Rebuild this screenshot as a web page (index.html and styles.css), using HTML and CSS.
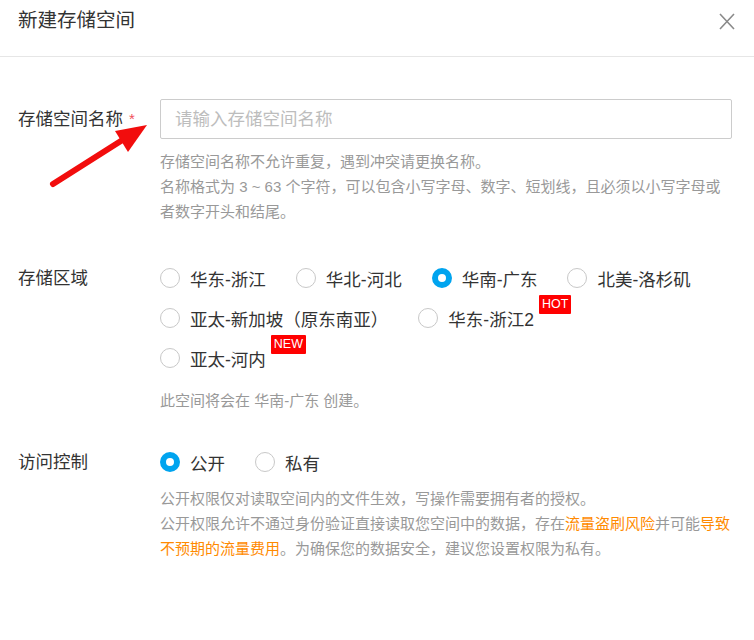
FILE: index.html
```html
<!DOCTYPE html>
<html lang="zh-CN">
<head>
<meta charset="utf-8">
<title>新建存储空间</title>
<link rel="stylesheet" href="styles.css">
</head>
<body>
<div class="dialog">
  <header class="dlg-head">
    <h1 class="dlg-title">新建存储空间</h1>
    <button class="dlg-close" type="button" aria-label="关闭">
      <svg width="16" height="17" viewBox="0 0 16 17"><path d="M1 1 L15 16 M15 1 L1 16" stroke="#8a8a8a" stroke-width="1.6" fill="none"/></svg>
    </button>
  </header>

  <form class="dlg-body">
    <div class="field field-name">
      <label class="field-label">存储空间名称<span class="req">*</span></label>
      <div class="field-control">
        <input class="text-input" type="text" placeholder="请输入存储空间名称">
        <p class="help help-name">存储空间名称不允许重复，遇到冲突请更换名称。<br>名称格式为 3 ~ 63 个字符，可以包含小写字母、数字、短划线，且必须以小写字母或<br>者数字开头和结尾。</p>
      </div>
    </div>

    <div class="field field-region">
      <label class="field-label">存储区域</label>
      <div class="field-control">
        <div class="radio-group">
          <label class="radio"><span class="radio-dot"></span><span class="radio-text">华东-浙江</span></label>
          <label class="radio"><span class="radio-dot"></span><span class="radio-text">华北-河北</span></label>
          <label class="radio"><span class="radio-dot checked"></span><span class="radio-text">华南-广东</span></label>
          <label class="radio"><span class="radio-dot"></span><span class="radio-text">北美-洛杉矶</span></label>
          <label class="radio"><span class="radio-dot"></span><span class="radio-text">亚太-新加坡（原东南亚）</span></label>
          <label class="radio"><span class="radio-dot"></span><span class="radio-text">华东-浙江2</span><span class="badge">HOT</span></label>
          <label class="radio"><span class="radio-dot"></span><span class="radio-text">亚太-河内</span><span class="badge">NEW</span></label>
        </div>
        <p class="help help-region">此空间将会在 华南-广东 创建。</p>
      </div>
    </div>

    <div class="field field-access">
      <label class="field-label">访问控制</label>
      <div class="field-control">
        <div class="radio-group">
          <label class="radio"><span class="radio-dot checked"></span><span class="radio-text">公开</span></label>
          <label class="radio"><span class="radio-dot"></span><span class="radio-text">私有</span></label>
        </div>
        <p class="help help-access">公开权限仅对读取空间内的文件生效，写操作需要拥有者的授权。<br>公开权限允许不通过身份验证直接读取您空间中的数据，存在<span class="warn">流量盗刷风险</span>并可能<span class="warn">导致不预期的流量费用</span>。为确保您的数据安全，建议您设置权限为私有。</p>
      </div>
    </div>
  </form>

  <svg class="annot-arrow" width="754" height="640" viewBox="0 0 754 640" aria-hidden="true">
    <line x1="53" y1="184" x2="124" y2="139" stroke="#f20d0d" stroke-width="6" stroke-linecap="round"/>
    <polygon points="147,125 115,131 128,152" fill="#f20d0d"/>
  </svg>
</div>
</body>
</html>
```

FILE: styles.css
```css
html, body {
  margin: 0;
  padding: 0;
  background: #fff;
}

body {
  font-family: "Liberation Sans", "Noto Sans CJK SC", sans-serif;
  color: #333;
}

.dialog {
  position: relative;
  width: 754px;
  height: 640px;
  overflow: hidden;
}

.dlg-head {
  display: flex;
  justify-content: space-between;
  align-items: flex-start;
  box-sizing: border-box;
  height: 57px;
  padding: 6px 19px 0 18px;
  border-bottom: 1px solid #e6e6e6;
}

.dlg-title {
  margin: 0;
  font-size: 19.5px;
  font-weight: normal;
  line-height: 28px;
  color: #333;
}

.dlg-close {
  display: flex;
  margin: 7px 0 0;
  padding: 0;
  border: 0;
  background: none;
}

.dlg-body {
  display: flex;
  flex-direction: column;
  padding: 42px 22px 0 18px;
}

.field {
  display: grid;
  grid-template-columns: 142px 1fr;
}

.field-name { margin-bottom: 34px; }
.field-region { margin-bottom: 29px; }

.field-label {
  font-size: 17.5px;
  line-height: 40px;
  color: #333;
}

.req {
  color: #f0505a;
  font-size: 15px;
  margin-left: 6px;
  vertical-align: 1px;
}

.text-input {
  display: block;
  box-sizing: border-box;
  width: 100%;
  height: 40px;
  margin: 0;
  padding: 0 14px;
  border: 1px solid #cccccc;
  border-radius: 2px;
  font-family: inherit;
  font-size: 17.5px;
  color: #333;
  outline: none;
}

.text-input::placeholder {
  color: #bdbdbd;
}

.help {
  margin: 0;
  font-size: 15px;
  line-height: 25px;
  color: #999;
}

.help-name { margin-top: 10px; }
.help-region { margin-top: 10px; }
.help-access { margin-top: 4px; }

.warn { color: #ff8a00; }

.radio-group {
  display: flex;
  flex-wrap: wrap;
  column-gap: 30px;
}

.radio {
  display: flex;
  align-items: center;
  height: 40px;
  font-size: 17.5px;
  color: #333;
}

.radio-dot {
  box-sizing: border-box;
  width: 20px;
  height: 20px;
  margin-right: 10px;
  border: 1px solid #c8c8c8;
  border-radius: 50%;
  background: #fff;
}

.radio-dot.checked {
  border: 6px solid #00a4ef;
}

.badge {
  align-self: flex-start;
  margin: -3px 0 0 5px;
  padding: 0 3px;
  background: #ff0000;
  color: #fff;
  font-size: 12.5px;
  line-height: 19px;
  border-radius: 1px;
}

.annot-arrow {
  position: absolute;
  left: 0;
  top: 0;
  pointer-events: none;
}
```
